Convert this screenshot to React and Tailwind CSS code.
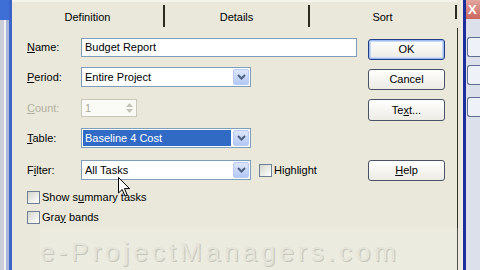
import React from "react";

function Combo({ text, selected }) {
  return (
    <div className="flex h-[20px] w-[170px] border border-[#7F9DB9] bg-white">
      <div className="flex flex-1 items-center p-[1px]">
        {selected ? (
          <div className="flex h-full w-full items-center bg-[#316AC5] pl-[2px] text-white">{text}</div>
        ) : (
          <div className="flex h-full w-full items-center pl-[2px]">{text}</div>
        )}
      </div>
      <div className="m-[1px] flex w-[16px] items-center justify-center rounded-[2px] border border-[#B9CBF3] bg-linear-to-b from-[#DDE7FC] to-[#B4C8F4]">
        <svg width="9" height="6" viewBox="0 0 9 6">
          <path d="M1 1 L4.5 4.5 L8 1" stroke="#4D6185" strokeWidth="2" fill="none" />
        </svg>
      </div>
    </div>
  );
}

function Btn({ children, def, h }) {
  return (
    <div
      className={
        def
          ? "flex h-[21px] w-[77px] items-center justify-center rounded-[3px] border border-[#1F3C84] bg-linear-to-b from-white to-[#ECEBE4] shadow-[inset_0_0_0_1px_#9FBBF0,inset_0_0_0_2px_#C9D8F7]"
          : h
          ? "flex h-[22px] w-[77px] items-center justify-center rounded-[3px] border border-[#4A5366] bg-linear-to-b from-white to-[#ECEBE4]"
          : "flex h-[21px] w-[77px] items-center justify-center rounded-[3px] border border-[#4A5366] bg-linear-to-b from-white to-[#ECEBE4]"
      }
    >
      {children}
    </div>
  );
}

function Check() {
  return <div className="h-[13px] w-[13px] border border-[#6E7F97] bg-linear-to-br from-[#D6D6CE] to-white" />;
}

export default function App() {
  return (
    <div className="relative flex h-[270px] w-[480px] overflow-hidden bg-[#E9E8DA] font-['Liberation_Sans',Arial,sans-serif] text-[11px] text-black">
      {/* left background window strip */}
      <div className="flex w-[9px] flex-col">
        <div className="h-[20px] bg-[#3D6FD6]" />
        <div className="flex flex-1">
          <div className="w-[4px] bg-[#C9CDD6]" />
          <div className="w-[2px] bg-[#F2F2F2]" />
          <div className="w-[3px] bg-[#A9B8D8]" />
        </div>
      </div>
      <div className="w-[3px] bg-[#3C64C8]" />

      {/* dialog */}
      <div className="flex w-[445px] flex-col">
        {/* tabs */}
        <div className="flex h-[30px] border-t-2 border-[#F4F3EC]">
          <div className="flex w-[151px] items-center justify-center pt-[2px]">Definition</div>
          <div className="mt-[3px] h-[22px] w-[2px] bg-[#2B2B22]" />
          <div className="flex w-[143px] items-center justify-center pt-[2px]">Details</div>
          <div className="mt-[3px] h-[22px] w-[2px] bg-[#2B2B22]" />
          <div className="flex w-[145px] items-center justify-center pt-[2px]">Sort</div>
          <div className="mt-[3px] h-[14px] w-[2px] bg-[#2B2B22]" />
        </div>

        <div className="flex flex-1">
          {/* left column */}
          <div className="flex w-[356px] flex-col pl-[15px]">
            <div className="mt-[8px] flex h-[19px] items-center">
              <div className="w-[54px]"><span className="underline">N</span>ame:</div>
              <div className="flex h-[19px] w-[276px] items-center border border-[#7F9DB9] bg-white pl-[3px]">Budget Report</div>
            </div>
            <div className="mt-[10px] flex h-[20px] items-center">
              <div className="w-[54px]"><span className="underline">P</span>eriod:</div>
              <Combo text="Entire Project" />
            </div>
            <div className="mt-[12px] flex h-[18px] items-center">
              <div className="w-[54px] text-[#B2B0A2]"><span className="underline">C</span>ount:</div>
              <div className="flex h-[18px] w-[56px] border border-[#C9C7BA] bg-[#FAFAF6]">
                <div className="flex flex-1 items-center pl-[3px] text-[#ACA899]">1</div>
                <div className="flex w-[14px] flex-col items-center justify-center gap-[2px]">
                  <svg width="7" height="4" viewBox="0 0 7 4"><path d="M0 4 L3.5 0 L7 4 Z" fill="#C4C2B6" /></svg>
                  <svg width="7" height="4" viewBox="0 0 7 4"><path d="M0 0 L3.5 4 L7 0 Z" fill="#C4C2B6" /></svg>
                </div>
              </div>
            </div>
            <div className="mt-[11px] flex h-[20px] items-center">
              <div className="w-[54px]"><span className="underline">T</span>able:</div>
              <Combo text="Baseline 4 Cost" selected />
            </div>
            <div className="mt-[12px] flex h-[20px] items-center">
              <div className="w-[54px]">F<span className="underline">i</span>lter:</div>
              <Combo text="All Tasks" />
              <div className="ml-[8px] flex items-center gap-[2px]">
                <Check />
                <span>Hi<span className="underline">g</span>hlight</span>
              </div>
            </div>
            <div className="mt-[10px] flex h-[14px] items-center gap-[2px]">
              <Check />
              <span>Show s<span className="underline">u</span>mmary tasks</span>
            </div>
            <div className="mt-[6px] flex h-[14px] items-center gap-[2px]">
              <Check />
              <span>Gra<span className="underline">y</span> bands</span>
            </div>
          </div>

          {/* right column buttons */}
          <div className="flex w-[77px] flex-col">
            <div className="mt-[9px]"><Btn def>OK</Btn></div>
            <div className="mt-[9px]"><Btn>Cancel</Btn></div>
            <div className="mt-[9px]"><Btn h>Te<span className="underline">x</span>t...</Btn></div>
            <div className="mt-[39px]"><Btn><span className="underline">H</span>elp</Btn></div>
          </div>
        </div>
      </div>

      {/* right edges */}
      <div className="flex w-[3px] flex-col">
        <div className="h-[28px]" />
        <div className="w-[1px] flex-1 bg-[#2F3326]" />
      </div>
      <div className="w-[3px] bg-[#EDECE3]" />
      <div className="w-[3px] bg-[#1C2E9C]" />
      <div className="flex w-[14px] flex-col bg-[#DCE0EA]">
        <div className="flex h-[19px] items-center bg-linear-to-b from-[#E3A59E] to-[#C9665D] pl-[2px] text-[13px] font-bold text-white">X</div>
        <div className="mt-[18px] ml-[1px] h-[20px] rounded-l-[3px] border border-r-0 border-[#5D6E92] bg-[#EEF1F8]" />
        <div className="mt-[8px] ml-[1px] h-[20px] rounded-l-[3px] border border-r-0 border-[#5D6E92] bg-[#EEF1F8]" />
        <div className="mt-[12px] ml-[1px] h-[20px] rounded-l-[3px] border border-r-0 border-[#5D6E92] bg-[#EEF1F8]" />
      </div>

      {/* watermark overlay */}
      <div className="absolute left-[40px] top-[228px] h-[42px] w-[420px] bg-white/15" />
      <div className="absolute left-[40px] top-[239px] whitespace-nowrap text-[26px] leading-[26px] tracking-[4px] text-[#E4E4DA] [text-shadow:1px_1px_0_#C6C6BA]">
        e-ProjectManagers.com
      </div>

      {/* mouse cursor */}
      <svg className="absolute left-[118px] top-[177px]" width="13" height="21" viewBox="0 0 13 21">
        <path d="M0.5 0.5 L0.5 16 L4.2 12.5 L7 19 L9.2 18 L6.5 11.6 L11.5 11.6 Z" fill="white" stroke="black" strokeWidth="1" />
      </svg>
    </div>
  );
}
